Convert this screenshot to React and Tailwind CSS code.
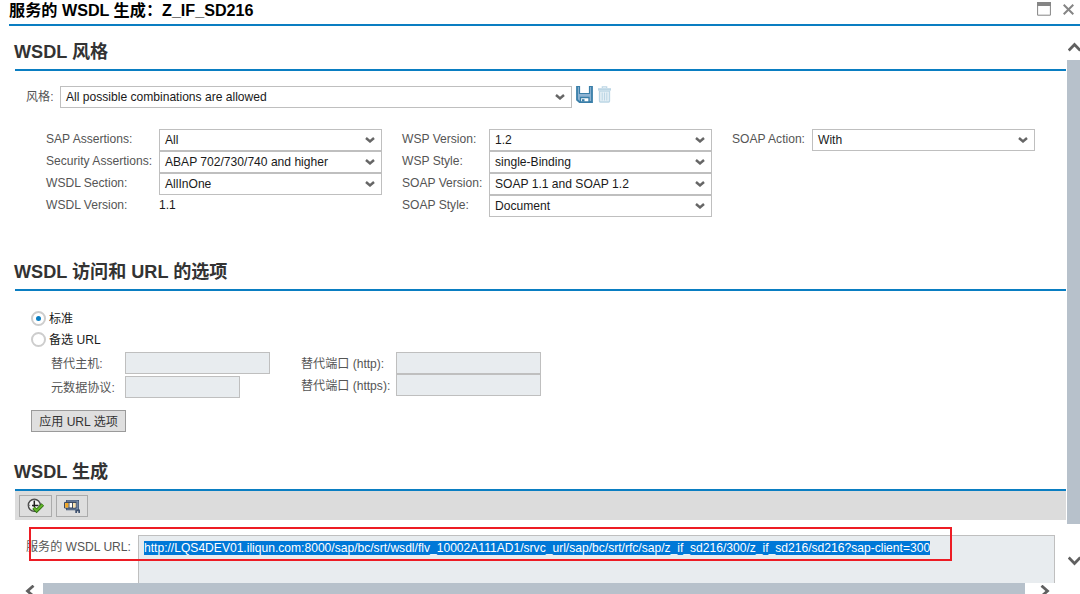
import React, { useState } from 'react';

const Arrow = ({ className }) => (
    <svg className={className} width="10" height="6" viewBox="0 0 10 6" fill="none" stroke="#666" strokeWidth="2.5">
        <path d="M1 1L5 4.4L9 1" />
    </svg>
);

const Select = ({ value, className }) => (
    <div className={`flex h-[22px] items-center justify-between border border-[#bfbfbf] bg-white pr-[6px] pl-[5px] text-[#1a1a1a] ${className}`}>
        <span className="whitespace-nowrap">{value}</span>
        <Arrow />
    </div>
);

const Label = ({ children, className }) => (
    <div className={`h-[22px] leading-[20px] whitespace-nowrap text-[#555] ${className}`}>{children}</div>
);

const Field = ({ label, value, labelWidth }) => (
    <div className="flex h-[22px]">
        <Label className={labelWidth}>{label}</Label>
        <Select value={value} className="w-[223px]" />
    </div>
);

const Heading = ({ children }) => (
    <h2 className="h-[36px] border-b-2 border-[#0a7ec2] pt-[3px] text-[18.1px] leading-[28px] font-bold whitespace-nowrap text-[#333]">
        <span className="-ml-px">{children}</span>
    </h2>
);

const DisabledInput = ({ className }) => (
    <div className={`h-[22px] border border-[#bfbfbf] bg-[#e8ecef] ${className}`} />
);

const Radio = ({ label, checked, onClick }) => (
    <div className="flex h-[21px] items-center text-[#1a1a1a]" onClick={onClick}>
        <span className="flex h-[15px] w-[15px] items-center justify-center rounded-full border-2 border-[#cdcdcd] bg-white">
            {checked && <span className="h-[5px] w-[5px] rounded-full bg-[#0a7ec2]" />}
        </span>
        <span className="ml-[3px] pt-[2px] whitespace-nowrap">{label}</span>
    </div>
);

const SaveIcon = () => (
    <svg width="17" height="17" viewBox="0 0 17 17">
        <path d="M1 0H16V16H3.5L1 13.8Z" fill="#8fb4d3" stroke="#3a7fa9" strokeWidth="1.8" />
        <path d="M3.5 0H13.5V7H3.5Z" fill="#fff" />
        <path d="M3.5 0V7.5H13.5V0" fill="none" stroke="#3a7fa9" strokeWidth="1.2" />
        <path d="M4.5 16V11.5H13V16Z" fill="#fff" stroke="#3a7fa9" strokeWidth="1.3" />
        <path d="M6 13.2H8.5V15.5H6Z" fill="#3a7fa9" />
    </svg>
);

const TrashIcon = () => (
    <svg width="13" height="17" viewBox="0 0 13 17" fill="none" stroke="#bcd6e5">
        <path d="M4.3 2V0.8H8.7V2" strokeWidth="1.2" />
        <path d="M0 3.4H13" strokeWidth="2.4" />
        <path d="M1.5 5.2V15.3Q1.5 16 2.3 16H10.7Q11.5 16 11.5 15.3V5.2Z" fill="#e6f0f6" strokeWidth="1.3" />
        <path d="M4.2 6.5V14.5M6.5 6.5V14.5M8.8 6.5V14.5" strokeWidth="1.1" />
    </svg>
);

const RunIcon = () => (
    <svg width="18" height="16" viewBox="0 0 18 16" fill="none">
        <circle cx="7.3" cy="7.3" r="6" fill="#f4f4f4" stroke="#4a4a4a" strokeWidth="1.4" />
        <path d="M7.3 1.5V3M7.3 11.5V13M1.5 7.3H3.2" stroke="#777" />
        <path d="M7.3 3V9M5 7.5H11.5" stroke="#222" strokeWidth="1.5" />
        <path d="M6.5 9.8L9.6 12.8L15.8 6.5" stroke="#2d6b12" strokeWidth="3.6" />
        <path d="M6.8 10L9.6 12.6L15.6 6.7" stroke="#62b52a" strokeWidth="2" />
    </svg>
);

const TestIcon = () => (
    <svg width="17" height="15" viewBox="0 0 17 15">
        <path d="M2 1H15V10.5H16V14H14.3V12.3H13V14H11.3V11.3H2V8.8H12.6V3.4H2Z" fill="#3f5270" />
        <path d="M2.8 2.1H13.8V9.9H2.8" fill="none" stroke="#8ca3c2" strokeWidth="0.9" />
        <path d="M0.6 3.4H12V9H0.6Z" fill="#fff" stroke="#2e3c54" strokeWidth="1" />
        <path d="M1.1 4H4.6V8.5H1.1Z" fill="#f0a625" />
        <path d="M8.8 4H11.5V8.5H8.8Z" fill="#fbe3ae" />
        <path d="M5 3.6V9M8.5 3.6V9" stroke="#2e3c54" strokeWidth="0.9" />
    </svg>
);

const wsdlUrl = 'http://LQS4DEV01.iliqun.com:8000/sap/bc/srt/wsdl/flv_10002A111AD1/srvc_url/sap/bc/srt/rfc/sap/z_if_sd216/300/z_if_sd216/sd216?sap-client=300';

const App = () => {
    const [hostMode, setHostMode] = useState('standard');

    return (
        <div className="relative h-[594px] w-[1080px] overflow-hidden bg-white font-['Liberation_Sans','Noto_Sans_CJK_SC',sans-serif] text-[12.08px]">
            <header className="ml-[9px] flex h-[26px] items-start justify-between border-b-2 border-[#0a7ec2]">
                <h1 className="text-[16.15px] leading-[21px] font-bold whitespace-nowrap text-black">服务的 WSDL 生成：Z_IF_SD216</h1>
                <div className="flex gap-[12px] pt-[2px] pr-[6px]">
                    <svg width="14" height="14" viewBox="0 0 14 14" fill="none" stroke="#858585">
                        <path d="M0.6 0.6H13.4V13.2H0.6Z" />
                        <path d="M0 2H14" strokeWidth="4" />
                    </svg>
                    <svg className="mt-[2px]" width="11" height="11" viewBox="0 0 11 11" stroke="#858585" strokeWidth="2">
                        <path d="M0.7 0.7L10.3 10.3M10.3 0.7L0.7 10.3" />
                    </svg>
                </div>
            </header>

            <div className="flex h-[568px]">
                <div className="w-[1067px] pr-px">
                    <main className="h-[557px] overflow-hidden pt-[9px] pl-[15px]">
                        <section className="h-[220px]">
                            <Heading>WSDL 风格</Heading>
                            <div className="flex pt-[15px] pl-[11px]">
                                <Label className="w-[34px] pt-px">风格:</Label>
                                <Select value="All possible combinations are allowed" className="w-[512px]" />
                                <div className="flex gap-[5px] pl-[4px]">
                                    <SaveIcon />
                                    <TrashIcon />
                                </div>
                            </div>
                            <div className="flex pt-[21px] pl-[31px]">
                                <div className="w-[356px]">
                                    <Field label="SAP Assertions:" value="All" labelWidth="w-[113px]" />
                                    <Field label="Security Assertions:" value="ABAP 702/730/740 and higher" labelWidth="w-[113px]" />
                                    <Field label="WSDL Section:" value="AllInOne" labelWidth="w-[113px]" />
                                    <div className="flex">
                                        <Label className="w-[113px]">WSDL Version:</Label>
                                        <span className="leading-[20px] text-[#1a1a1a]">1.1</span>
                                    </div>
                                </div>
                                <div className="w-[330px]">
                                    <Field label="WSP Version:" value="1.2" labelWidth="w-[87px]" />
                                    <Field label="WSP Style:" value="single-Binding" labelWidth="w-[87px]" />
                                    <Field label="SOAP Version:" value="SOAP 1.1 and SOAP 1.2" labelWidth="w-[87px]" />
                                    <Field label="SOAP Style:" value="Document" labelWidth="w-[87px]" />
                                </div>
                                <div>
                                    <Field label="SOAP Action:" value="With" labelWidth="w-[80px]" />
                                </div>
                            </div>
                        </section>

                        <section className="h-[200px]">
                            <Heading>WSDL 访问和 URL 的选项</Heading>
                            <div className="pt-[17px] pl-[16px]">
                                <Radio label="标准" checked={hostMode === 'standard'} onClick={() => setHostMode('standard')} />
                                <Radio label="备选 URL" checked={hostMode === 'alternative'} onClick={() => setHostMode('alternative')} />
                                <div className="flex pt-[2px] pl-[20px]">
                                    <div className="w-[250px]">
                                        <div className="flex pb-[2px]">
                                            <Label className="w-[74px] pt-[2px]">替代主机:</Label>
                                            <DisabledInput className="w-[145px]" />
                                        </div>
                                        <div className="flex">
                                            <Label className="w-[74px] pt-[2px]">元数据协议:</Label>
                                            <DisabledInput className="w-[115px]" />
                                        </div>
                                    </div>
                                    <div>
                                        <div className="flex">
                                            <Label className="w-[95px] pt-[2px]">替代端口 (http):</Label>
                                            <DisabledInput className="w-[145px]" />
                                        </div>
                                        <div className="flex">
                                            <Label className="w-[95px] pt-[2px]">替代端口 (https):</Label>
                                            <DisabledInput className="w-[145px]" />
                                        </div>
                                    </div>
                                </div>
                                <button className="mt-[12px] block h-[22px] w-[95px] border border-[#9a9a9a] bg-[#dfdfdf] pt-px leading-[20px] whitespace-nowrap text-[#333]">应用 URL 选项</button>
                            </div>
                        </section>

                        <section>
                            <Heading>WSDL 生成</Heading>
                            <div className="flex h-[29px] gap-[4px] bg-[#dcdcdc] pt-[4px] pl-[4px]">
                                <button className="flex h-[22px] w-[33px] items-center justify-center border border-[#ababab] bg-[#dedede]">
                                    <RunIcon />
                                </button>
                                <button className="flex h-[22px] w-[32px] items-center justify-center border border-[#ababab] bg-[#dedede]">
                                    <TestIcon />
                                </button>
                            </div>
                            <div className="flex pt-[15px] pl-[11px]">
                                <Label className="w-[112px] pt-[2px]">服务的 WSDL URL:</Label>
                                <div className="h-[60px] w-[917px] border border-[#bfbfbf] bg-[#e8ecef] pt-[5px] pl-[5px]">
                                    <p className="h-[14px] w-fit bg-[#0078d7] leading-[14px] whitespace-nowrap text-white">{wsdlUrl}</p>
                                </div>
                            </div>
                        </section>
                    </main>

                    {/* horizontal scrollbar */}
                    <div className="flex h-[11px] overflow-hidden">
                        <svg className="mt-[2px] ml-[25px]" width="10" height="12" viewBox="0 0 10 12" fill="none" stroke="#606060" strokeWidth="2.8">
                            <path d="M8.5 0.7L2.5 6L8.5 11.3" />
                        </svg>
                        <div className="ml-[8px] h-[11px] w-[982px] bg-[#b7c1cb]" />
                        <svg className="mt-[2px] ml-[15px]" width="10" height="12" viewBox="0 0 10 12" fill="none" stroke="#606060" strokeWidth="2.8">
                            <path d="M1.5 0.7L7.5 6L1.5 11.3" />
                        </svg>
                    </div>
                </div>

                {/* vertical scrollbar */}
                <div className="w-[13px] overflow-hidden">
                    <svg className="mt-[16px] ml-[1px] max-w-none" width="13" height="10" viewBox="0 0 13 10" fill="none" stroke="#606060" strokeWidth="2.8">
                        <path d="M0.7 8.5L6.5 2.5L12.3 8.5" />
                    </svg>
                    <div className="mt-[8px] h-[464px] bg-[#b7c1cb]" />
                    <svg className="mt-[32px] ml-[1px] max-w-none" width="13" height="10" viewBox="0 0 13 10" fill="none" stroke="#606060" strokeWidth="2.8">
                        <path d="M0.7 1.5L6.5 7.5L12.3 1.5" />
                    </svg>
                </div>
            </div>

            {/* marker around the generated url */}
            <div className="absolute top-[527px] left-[29px] h-[34px] w-[923px] border-2 border-[#ed1c24]" />
        </div>
    );
};

export default App;
